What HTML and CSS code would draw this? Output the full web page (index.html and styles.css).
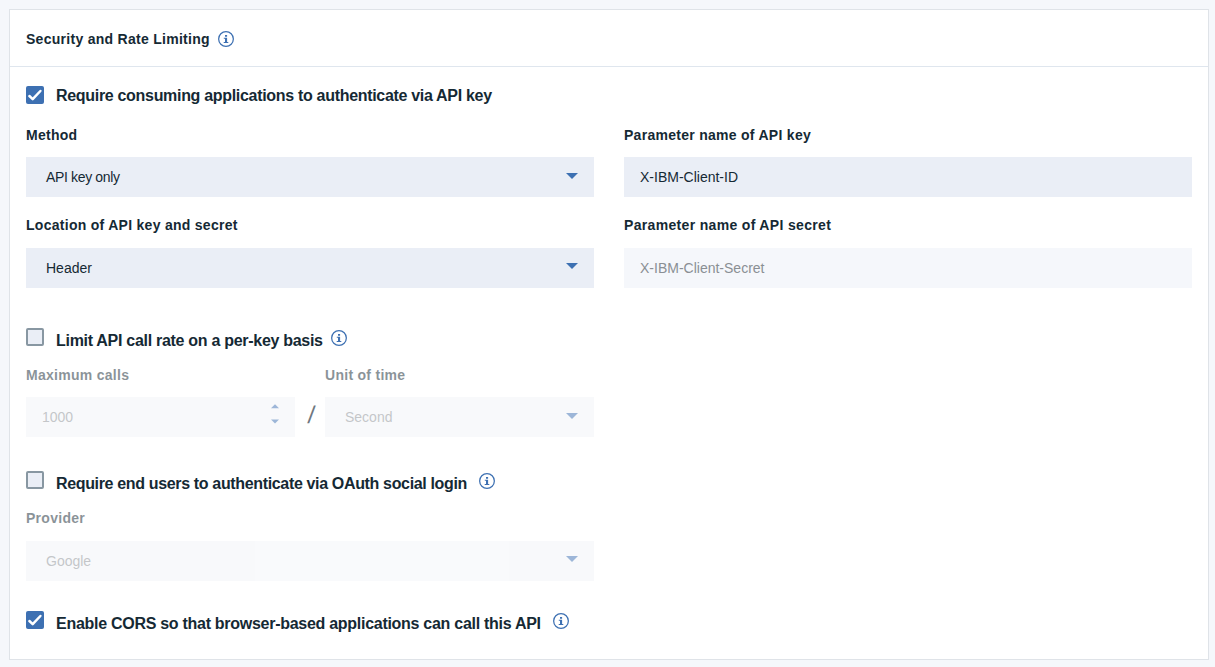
FILE: index.html
```html
<!DOCTYPE html>
<html lang="en">
<head>
<meta charset="utf-8">
<title>Security and Rate Limiting</title>
<link rel="stylesheet" href="styles.css">
</head>
<body>
<svg class="defs" aria-hidden="true">
  <symbol id="info" viewBox="0 0 16 16">
    <circle cx="8" cy="8" r="7.35" fill="none" stroke="#3d70b2" stroke-width="1.25"/>
    <path fill="#3d70b2" d="M7 4h2.1v1.8H7zM5.8 6.7h3.3v4.2h1.2V12H5.7v-1.1H7V7.8H5.8z"/>
  </symbol>
  <symbol id="check" viewBox="0 0 18 18">
    <path d="M3.4 10l3.3 3.1 7.7-8.1" fill="none" stroke="#fff" stroke-width="2.5" stroke-linecap="round" stroke-linejoin="round"/>
  </symbol>
  <symbol id="caret" viewBox="0 0 12 6"><path fill="#3d70b2" d="M0 0h12L6 6z"/></symbol>
</svg>
<section class="card">
  <header class="card-header">
    <h1 class="title">Security and Rate Limiting</h1>
    <svg class="info"><use href="#info"/></svg>
  </header>
  <div class="card-body">
    <div class="option option-first">
      <span class="checkbox checked"><svg><use href="#check"/></svg></span>
      <span class="option-label">Require consuming applications to authenticate via API key</span>
    </div>
    <div class="columns auth">
      <div class="field">
        <label class="label">Method</label>
        <div class="control select"><span class="tight">API key only</span><svg class="caret"><use href="#caret"/></svg></div>
      </div>
      <div class="field">
        <label class="label">Parameter name of API key</label>
        <div class="control">X-IBM-Client-ID</div>
      </div>
      <div class="field">
        <label class="label">Location of API key and secret</label>
        <div class="control select"><span>Header</span><svg class="caret caret-high"><use href="#caret"/></svg></div>
      </div>
      <div class="field">
        <label class="label label-wide">Parameter name of API secret</label>
        <div class="control readonly">X-IBM-Client-Secret</div>
      </div>
    </div>

    <div class="option option-rate">
      <span class="checkbox"></span>
      <span class="option-label">Limit API call rate on a per-key basis</span>
      <svg class="info"><use href="#info"/></svg>
    </div>
    <div class="rate">
      <div class="field disabled">
        <label class="label">Maximum calls</label>
        <div class="control number"><span>1000</span>
          <svg class="stepper" viewBox="0 0 8 20"><path fill="#3d70b2" d="M0 4.3h8L4 .3zM0 15.5h8l-4 4z"/></svg>
        </div>
      </div>
      <span class="slash">/</span>
      <div class="field disabled">
        <label class="label">Unit of time</label>
        <div class="control select"><span>Second</span><svg class="caret"><use href="#caret"/></svg></div>
      </div>
    </div>

    <div class="option option-oauth">
      <span class="checkbox"></span>
      <span class="option-label">Require end users to authenticate via OAuth social login</span>
      <svg class="info info-far"><use href="#info"/></svg>
    </div>
    <div class="columns provider">
      <div class="field disabled">
        <label class="label">Provider</label>
        <div class="control select"><span>Google</span><svg class="caret caret-high"><use href="#caret"/></svg></div>
      </div>
    </div>

    <div class="option option-cors">
      <span class="checkbox checked"><svg><use href="#check"/></svg></span>
      <span class="option-label">Enable CORS so that browser-based applications can call this API</span>
      <svg class="info info-far"><use href="#info"/></svg>
    </div>
  </div>
</section>
</body>
</html>
```
FILE: styles.css
```css
* { box-sizing: border-box; }
body {
  margin: 0;
  padding: 9px 6px 7px 9px;
  height: 667px;
  background: #f5f7fb;
  color: #152934;
  font: 14px/20px "Liberation Sans", Arial, sans-serif;
}
.defs { display: none; }
.card {
  height: 651px;
  background: #fff;
  border: 1px solid #dfe3e8;
}
.card-header {
  display: flex;
  align-items: center;
  gap: 8px;
  height: 57px;
  padding: 2px 16px 0;
  border-bottom: 1px solid #dfe6ee;
}
.title, .label {
  margin: 0;
  font-size: 14px;
  line-height: 20px;
  font-weight: 700;
  letter-spacing: 0.28px;
}
.label-wide { letter-spacing: 0.33px; }
.info { flex: none; width: 16px; height: 16px; }
.card-body { padding: 19px 16px 0; }
.option { display: flex; height: 18px; }
.checkbox {
  flex: none;
  width: 18px;
  height: 18px;
  margin-right: 12px;
  background: #eaeef6;
  border: 2px solid #8897a2;
  border-radius: 2px;
}
.checkbox.checked { background: #3d70b2; border: 0; }
.checkbox svg { display: block; width: 18px; height: 18px; }
.option-label {
  margin-top: 4px;
  font-size: 16px;
  line-height: 18px;
  font-weight: 700;
  letter-spacing: -0.31px;
  white-space: nowrap;
}
.option-first .option-label { margin-top: 1px; }
.option-rate .option-label { letter-spacing: -0.29px; }
.option-oauth .option-label { letter-spacing: -0.345px; }
.option-cors .option-label { letter-spacing: -0.28px; }
.option .info { margin: 2px 0 0 8px; }
.option .info-far { margin-left: 12px; }
.columns {
  display: grid;
  grid-template-columns: 568px 568px;
  column-gap: 30px;
}
.auth { margin-top: 21px; row-gap: 18px; }
.label { display: block; height: 32px; }
.auth .field:nth-child(n+3) .label,
.provider .label { height: 33px; }
.control {
  display: flex;
  align-items: center;
  height: 40px;
  padding: 0 16px;
  background: #eaeef6;
}
.select { justify-content: space-between; padding-left: 20px; }
.caret { width: 12px; height: 6px; margin-top: -2px; }
.caret-high { margin-top: -4px; }
.tight { letter-spacing: -0.35px; }
.readonly { background: #f5f7fb; color: #8a8f94; }
.disabled .label, .disabled .control { opacity: 0.5; }
.disabled .control { background: #f3f5f9; color: #8a8f94; }
.number { justify-content: space-between; }
.stepper { width: 8px; height: 20px; margin-top: -6px; }
.option-rate { margin-top: 40px; }
.rate {
  display: grid;
  grid-template-columns: 269px 30px 269px;
  margin-top: 19px;
}
.slash {
  padding: 40px 0 0 3px;
  text-align: center;
  font-size: 24px;
  color: #6f7780;
  transform: skewX(-6deg);
  transform-origin: 50% 50px;
}
.option-oauth { margin-top: 34px; }
.provider { margin-top: 19px; }
.option-cors { margin-top: 30px; }
```
